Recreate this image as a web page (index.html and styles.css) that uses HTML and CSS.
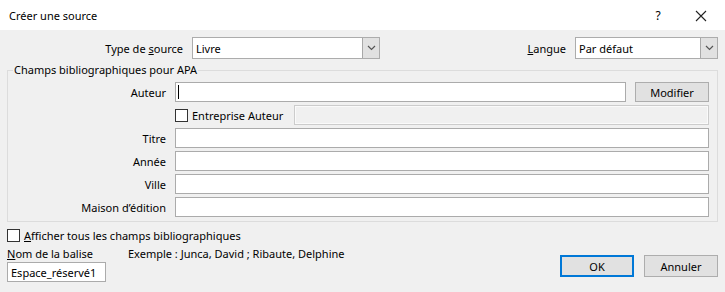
FILE: index.html
```html
<!DOCTYPE html>
<html lang="fr">
<head>
<meta charset="utf-8">
<title>Créer une source</title>
<link rel="stylesheet" href="styles.css">
</head>
<body>
<div class="dialog">
  <div class="titlebar">
    <span class="title">Créer une source</span>
    <span class="help">?</span>
    <span class="close"><svg width="12" height="12" viewBox="0 0 12 12"><path d="M1 1 L11 11 M11 1 L1 11" stroke="#222" stroke-width="1.1" fill="none"/></svg></span>
  </div>
  <div class="body">
    <div class="toprow">
      <label class="lbl-type">Type de <u>s</u>ource</label>
      <div class="combo combo-type"><span class="combo-text">Livre</span><span class="combo-btn"><svg width="9" height="6" viewBox="0 0 9 6"><path d="M1 1 L4.5 4.5 L8 1" stroke="#555" stroke-width="1.2" fill="none"/></svg></span></div>
      <label class="lbl-lang"><u>L</u>angue</label>
      <div class="combo combo-lang"><span class="combo-text">Par défaut</span><span class="combo-btn"><svg width="9" height="6" viewBox="0 0 9 6"><path d="M1 1 L4.5 4.5 L8 1" stroke="#555" stroke-width="1.2" fill="none"/></svg></span></div>
    </div>
    <fieldset class="group">
      <legend>Champs bibliographiques pour APA</legend>
      <div class="grid">
        <span class="lbl">Auteur</span>
        <div class="auteur-row"><div class="input grow"><span class="caret"></span></div><button class="btn modifier">Modifier</button></div>
        <span></span>
        <div class="ent-row"><span class="check"></span><span class="ent-text">Entreprise Auteur</span><div class="input disabled grow"></div></div>
        <span class="lbl">Titre</span><div class="input"></div>
        <span class="lbl">Année</span><div class="input"></div>
        <span class="lbl">Ville</span><div class="input"></div>
        <span class="lbl">Maison d’édition</span><div class="input"></div>
      </div>
    </fieldset>
    <div class="bottom">
      <div class="bottom-left">
        <div class="check-row"><span class="check"></span><span><u>A</u>fficher tous les champs bibliographiques</span></div>
        <div class="tag-row"><span class="tag-lbl"><u>N</u>om de la balise</span><span>Exemple : Junca, David ; Ribaute, Delphine</span></div>
        <div class="input tag-input">Espace_réservé1</div>
      </div>
      <div class="buttons"><button class="btn ok">OK</button><button class="btn">Annuler</button></div>
    </div>
  </div>
</div>
</body>
</html>
```

FILE: styles.css
```css
html, body {
  margin: 0;
  padding: 0;
}
body {
  width: 725px;
  height: 292px;
  background: #f0f0f0;
  font-family: "Noto Sans", "Open Sans", sans-serif;
  font-size: 11px;
  color: #000;
  overflow: hidden;
}
.dialog {
  width: 725px;
  height: 292px;
  display: flex;
  flex-direction: column;
}
.titlebar {
  height: 30px;
  background: #fff;
  display: flex;
  align-items: center;
  padding-left: 9px;
  box-sizing: border-box;
}
.title {
  flex: 1;
  font-size: 11px;
  line-height: 16px;
  margin-top: 1px;
}
.help {
  width: 12px;
  text-align: center;
  font-size: 12px;
  margin-right: 31px;
  margin-top: 1px;
}
.close {
  display: flex;
  margin-right: 18px;
  margin-top: 1px;
}
.body {
  flex: 1;
  display: flex;
  flex-direction: column;
  padding: 7px 7px 0 7px;
}
.toprow {
  display: flex;
  align-items: center;
  height: 22px;
}
.lbl-type {
  width: 176px;
  text-align: right;
  margin-right: 9px;
}
.lbl-lang {
  margin-left: auto;
  margin-right: 9px;
}
.combo {
  height: 22px;
  box-sizing: border-box;
  border: 1px solid #acacac;
  background: #fff;
  display: flex;
  align-items: center;
}
.combo-type { width: 188px; }
.combo-lang { width: 143px; }
.combo-text {
  flex: 1;
  padding-left: 3px;
}
.combo-btn {
  width: 17px;
  height: 20px;
  box-sizing: border-box;
  background: #e1e1e1;
  border: 1px solid #a8a8a8;
  border-width: 0 0 0 1px;
  display: flex;
  align-items: center;
  justify-content: center;
}
.group {
  margin: 3px 0 0 0;
  padding: 4px 8px 4px 0;
  border: 1px solid #dcdcdc;
  min-width: 0;
}
.group legend {
  margin-left: 5px;
  padding: 0 1px;
  line-height: 16px;
}
.grid {
  display: grid;
  grid-template-columns: 158px 1fr;
  column-gap: 9px;
  row-gap: 3px;
  grid-auto-rows: 20px;
  align-items: center;
}
.lbl {
  text-align: right;
}
.input {
  height: 20px;
  box-sizing: border-box;
  border: 1px solid #ababab;
  background: #fff;
  display: flex;
  align-items: center;
}
.grow { flex: 1; }
.disabled {
  background: #f0f0f0;
  border-color: #cccccc;
  box-shadow: inset 0 0 0 1px #fafafa;
}
.caret {
  width: 1px;
  height: 14px;
  background: #000;
  margin-left: 2px;
}
.auteur-row, .ent-row {
  display: flex;
  align-items: center;
  height: 20px;
}
.btn {
  font: inherit;
  color: #000;
  height: 22px;
  width: 74px;
  box-sizing: border-box;
  background: #e1e1e1;
  border: 1px solid #adadad;
  padding: 0;
  margin: 0;
}
.modifier {
  height: 20px;
  margin-left: 9px;
}
.check {
  width: 13px;
  height: 13px;
  box-sizing: border-box;
  border: 1px solid #333;
  background: #fff;
  flex: none;
}
.ent-text {
  margin-left: 4px;
  width: 102px;
}
.bottom {
  display: flex;
  margin-top: 5px;
}
.bottom-left {
  flex: 1;
  display: flex;
  flex-direction: column;
}
.check-row {
  display: flex;
  align-items: center;
  height: 16px;
  gap: 4px;
}
.tag-row {
  display: flex;
  align-items: center;
  height: 16px;
  margin-top: 2px;
}
.tag-lbl {
  width: 121px;
}
.tag-input {
  width: 99px;
  margin-top: 1px;
  padding-left: 3px;
}
.buttons {
  display: flex;
  gap: 10px;
  align-self: flex-end;
  margin-bottom: 5px;
}
.ok {
  border: 2px solid #0078d7;
}
```
